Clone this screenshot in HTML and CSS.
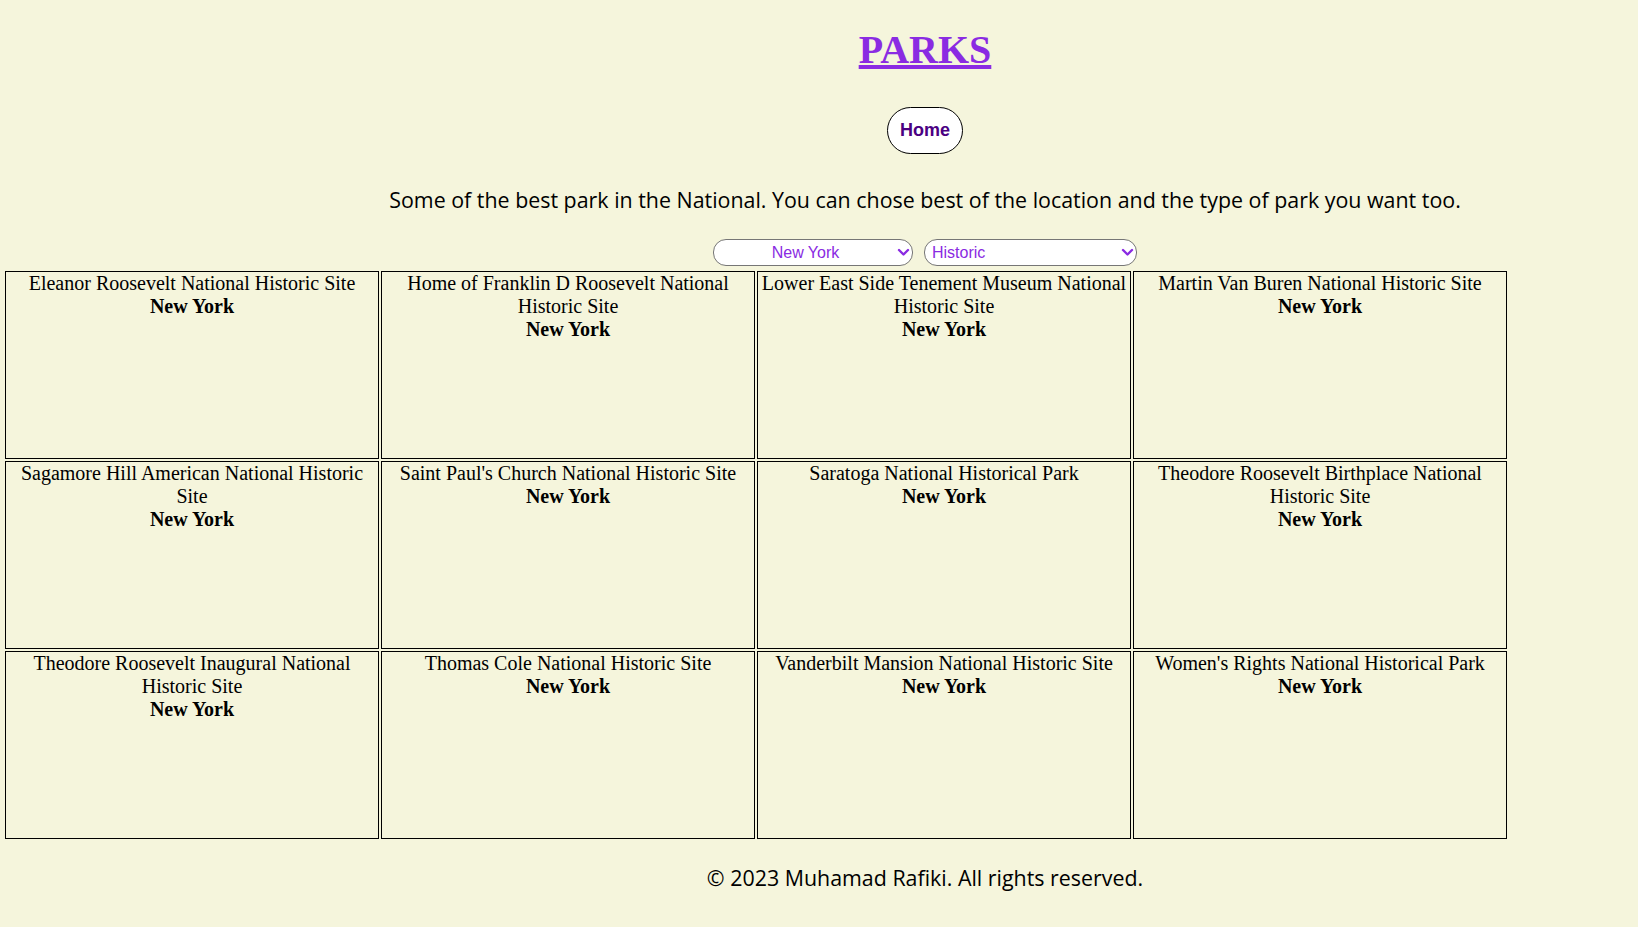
FILE: index.html
```html
<!DOCTYPE html>
<html lang="en">
<head>
<meta charset="utf-8">
<title>Parks</title>
<link rel="stylesheet" href="styles.css">
</head>
<body>
<header class="top">
  <h1 class="title"><a href="#" class="title-link">PARKS</a></h1>
  <nav class="nav"><a href="#" class="home-btn">Home</a></nav>
  <p class="intro">Some of the best park in the National. You can chose best of the location and the type of park you want too.</p>
  <div class="filters">
    <span class="select-wrap">
      <select class="filter filter-state"><option>New York</option></select>
      <svg class="chevron" width="13" height="9" viewBox="0 0 13 9"><path d="M2 2 L6.5 6.5 L11 2" fill="none" stroke="#8a2be2" stroke-width="2.4" stroke-linecap="round" stroke-linejoin="round"/></svg>
    </span>
    <span class="select-wrap">
      <select class="filter filter-type"><option>Historic</option></select>
      <svg class="chevron" width="13" height="9" viewBox="0 0 13 9"><path d="M2 2 L6.5 6.5 L11 2" fill="none" stroke="#8a2be2" stroke-width="2.4" stroke-linecap="round" stroke-linejoin="round"/></svg>
    </span>
  </div>
</header>
<main class="grid">
  <div class="card"><div class="card-name">Eleanor Roosevelt National Historic Site</div><div class="card-state">New York</div></div>
  <div class="card"><div class="card-name">Home of Franklin D Roosevelt National Historic Site</div><div class="card-state">New York</div></div>
  <div class="card"><div class="card-name">Lower East Side Tenement Museum National Historic Site</div><div class="card-state">New York</div></div>
  <div class="card"><div class="card-name">Martin Van Buren National Historic Site</div><div class="card-state">New York</div></div>
  <div class="card"><div class="card-name">Sagamore Hill American National Historic Site</div><div class="card-state">New York</div></div>
  <div class="card"><div class="card-name">Saint Paul's Church National Historic Site</div><div class="card-state">New York</div></div>
  <div class="card"><div class="card-name">Saratoga National Historical Park</div><div class="card-state">New York</div></div>
  <div class="card"><div class="card-name">Theodore Roosevelt Birthplace National Historic Site</div><div class="card-state">New York</div></div>
  <div class="card"><div class="card-name">Theodore Roosevelt Inaugural National Historic Site</div><div class="card-state">New York</div></div>
  <div class="card"><div class="card-name">Thomas Cole National Historic Site</div><div class="card-state">New York</div></div>
  <div class="card"><div class="card-name">Vanderbilt Mansion National Historic Site</div><div class="card-state">New York</div></div>
  <div class="card"><div class="card-name">Women's Rights National Historical Park</div><div class="card-state">New York</div></div>
</main>
<footer class="footer">© 2023 Muhamad Rafiki. All rights reserved.</footer>
</body>
</html>
```
FILE: styles.css
```css
html, body {
  margin: 0;
  padding: 0;
}
body {
  background: #f5f5dc;
  font-family: "Liberation Serif", "Times New Roman", serif;
  color: #000;
}
.top {
  padding-left: 212px;
  text-align: center;
}
.title {
  margin: 27px 0 0;
  font-family: "Liberation Serif", serif;
  font-size: 40px;
  font-weight: bold;
  line-height: 46px;
}
.title-link {
  color: #8a2be2;
}
.nav {
  margin-top: 34px;
}
.home-btn {
  display: inline-block;
  box-sizing: border-box;
  height: 47px;
  padding: 12px 12px;
  border: 1px solid #000;
  border-radius: 24px;
  background: #fff;
  color: #4b0082;
  font-family: "Liberation Sans", Arial, sans-serif;
  font-size: 18px;
  font-weight: bold;
  line-height: 21px;
  text-decoration: none;
}
.intro {
  margin: 31px 0 0;
  font-family: "Open Sans", "Noto Sans", sans-serif;
  font-size: 21.4px;
  line-height: 30px;
}
.filters {
  margin-top: 24px;
  display: flex;
  justify-content: center;
  gap: 11px;
}
.select-wrap {
  position: relative;
  display: inline-block;
  height: 27px;
}
.filter {
  box-sizing: border-box;
  height: 27px;
  padding: 0 22px 0 7px;
  border: 1px solid #767676;
  border-radius: 13px;
  background-color: #fff;
  color: #8a2be2;
  font-family: "Liberation Sans", Arial, sans-serif;
  font-size: 16px;
  appearance: none;
  -webkit-appearance: none;
  display: block;
}
.chevron {
  position: absolute;
  right: 3px;
  top: 9px;
  pointer-events: none;
}
.filter-state {
  width: 200px;
  text-align: center;
}
.filter-type {
  width: 213px;
}
.grid {
  margin: 5px 0 0 5px;
  display: grid;
  grid-template-columns: repeat(4, 374px);
  grid-auto-rows: 188px;
  gap: 2px;
}
.card {
  border: 1px solid #000;
  text-align: center;
  font-size: 20px;
  line-height: 23px;
}
.card-state {
  font-weight: bold;
}
.footer {
  padding-left: 212px;
  margin-top: 24px;
  text-align: center;
  font-family: "Open Sans", "Noto Sans", sans-serif;
  font-size: 21.4px;
  line-height: 30px;
}
```
